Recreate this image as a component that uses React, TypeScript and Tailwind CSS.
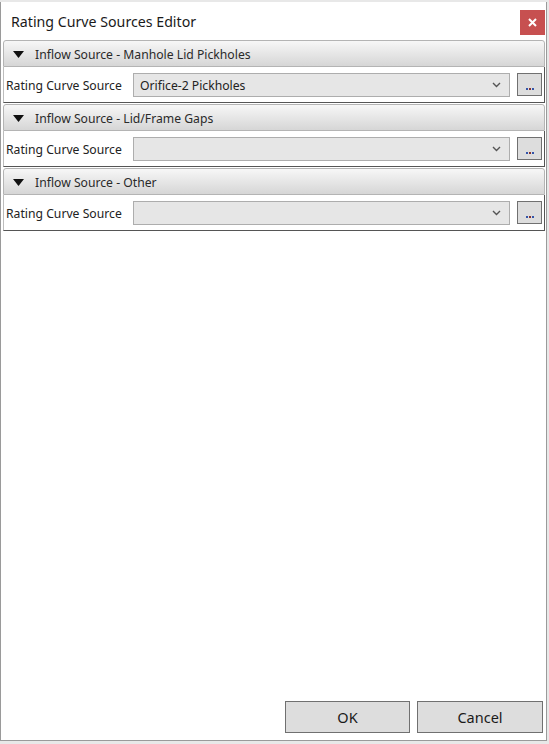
import React from "react";

const font = { fontFamily: '"Noto Sans", "Open Sans", sans-serif' };

function Section({ title, value }: { title: string; value: string }) {
  return (
    <div className="flex flex-col">
      <div className="h-[27px] flex items-center rounded-t-[3px] border border-[#b4b4b4] bg-gradient-to-b from-[#f7f7f7] to-[#d6d6d6] pl-[9px]">
        <svg width="11" height="8" viewBox="0 0 11 8" className="mr-[11px] mt-[2px]">
          <polygon points="0,0 11,0 5.5,7" fill="#111" />
        </svg>
        <span className="pt-[3px] text-[12.2px] text-[#2a2a2a] leading-none">{title}</span>
      </div>
      <div className="h-[36px] flex items-center border-l border-r border-b border-l-[#bdbdbd] border-r-[#555] border-b-[#555] bg-white">
        <span className="w-[129px] pl-[2px] pt-[3px] text-[12.2px] text-[#222]">Rating Curve Source</span>
        <div className="w-[377px] h-[24px] flex items-center justify-between border border-[#adadad] bg-[#e6e6e6] pl-[6px] pr-[8px]">
          <span className="pt-[3px] text-[12.2px] text-[#222]">{value}</span>
          <svg width="9" height="6" viewBox="0 0 9 6">
            <polyline points="1,1 4.5,4.5 8,1" fill="none" stroke="#555" strokeWidth="1.4" />
          </svg>
        </div>
        <div className="ml-[7px] w-[25px] h-[23px] flex items-end justify-center pb-[5px] border border-[#707070] bg-[#dddddd]">
          <span className="flex gap-[1px]">
            <span className="w-[2px] h-[2px] bg-[#3355aa]" />
            <span className="w-[2px] h-[2px] bg-[#883333]" />
            <span className="w-[2px] h-[2px] bg-[#3355aa]" />
          </span>
        </div>
      </div>
    </div>
  );
}

export default function App() {
  return (
    <div className="w-[549px] h-[744px] bg-[#e8e8e8] overflow-hidden" style={font}>
      <div className="mt-[2px] w-[547px] h-[739px] bg-white border-l border-r border-b border-[#9a9a9a] flex flex-col">
        <div className="h-[38px] flex items-start justify-between pl-[10px] pr-[1px]">
          <span className="mt-[9px] text-[14.2px] text-[#1a1a1a]">Rating Curve Sources Editor</span>
          <div className="mt-[8px] w-[25px] h-[25px] bg-[#c75050] flex items-center justify-center">
            <svg width="9" height="9" viewBox="0 0 9 9">
              <path d="M1 1 L8 8 M8 1 L1 8" stroke="#fff" strokeWidth="2" />
            </svg>
          </div>
        </div>
        <div className="flex flex-col gap-[1px] pl-[2px] pr-[1px]">
          <Section title="Inflow Source - Manhole Lid Pickholes" value="Orifice-2 Pickholes" />
          <Section title="Inflow Source - Lid/Frame Gaps" value="" />
          <Section title="Inflow Source - Other" value="" />
        </div>
        <div className="flex-1" />
        <div className="flex justify-end gap-[7px] pr-[3px] pb-[7px]">
          <button className="w-[125px] h-[32px] pt-[2px] border border-[#707070] bg-[#dddddd] text-[14.5px] text-[#1a1a1a]">OK</button>
          <button className="w-[126px] h-[32px] pt-[2px] border border-[#707070] bg-[#dddddd] text-[14.5px] text-[#1a1a1a]">Cancel</button>
        </div>
      </div>
    </div>
  );
}
